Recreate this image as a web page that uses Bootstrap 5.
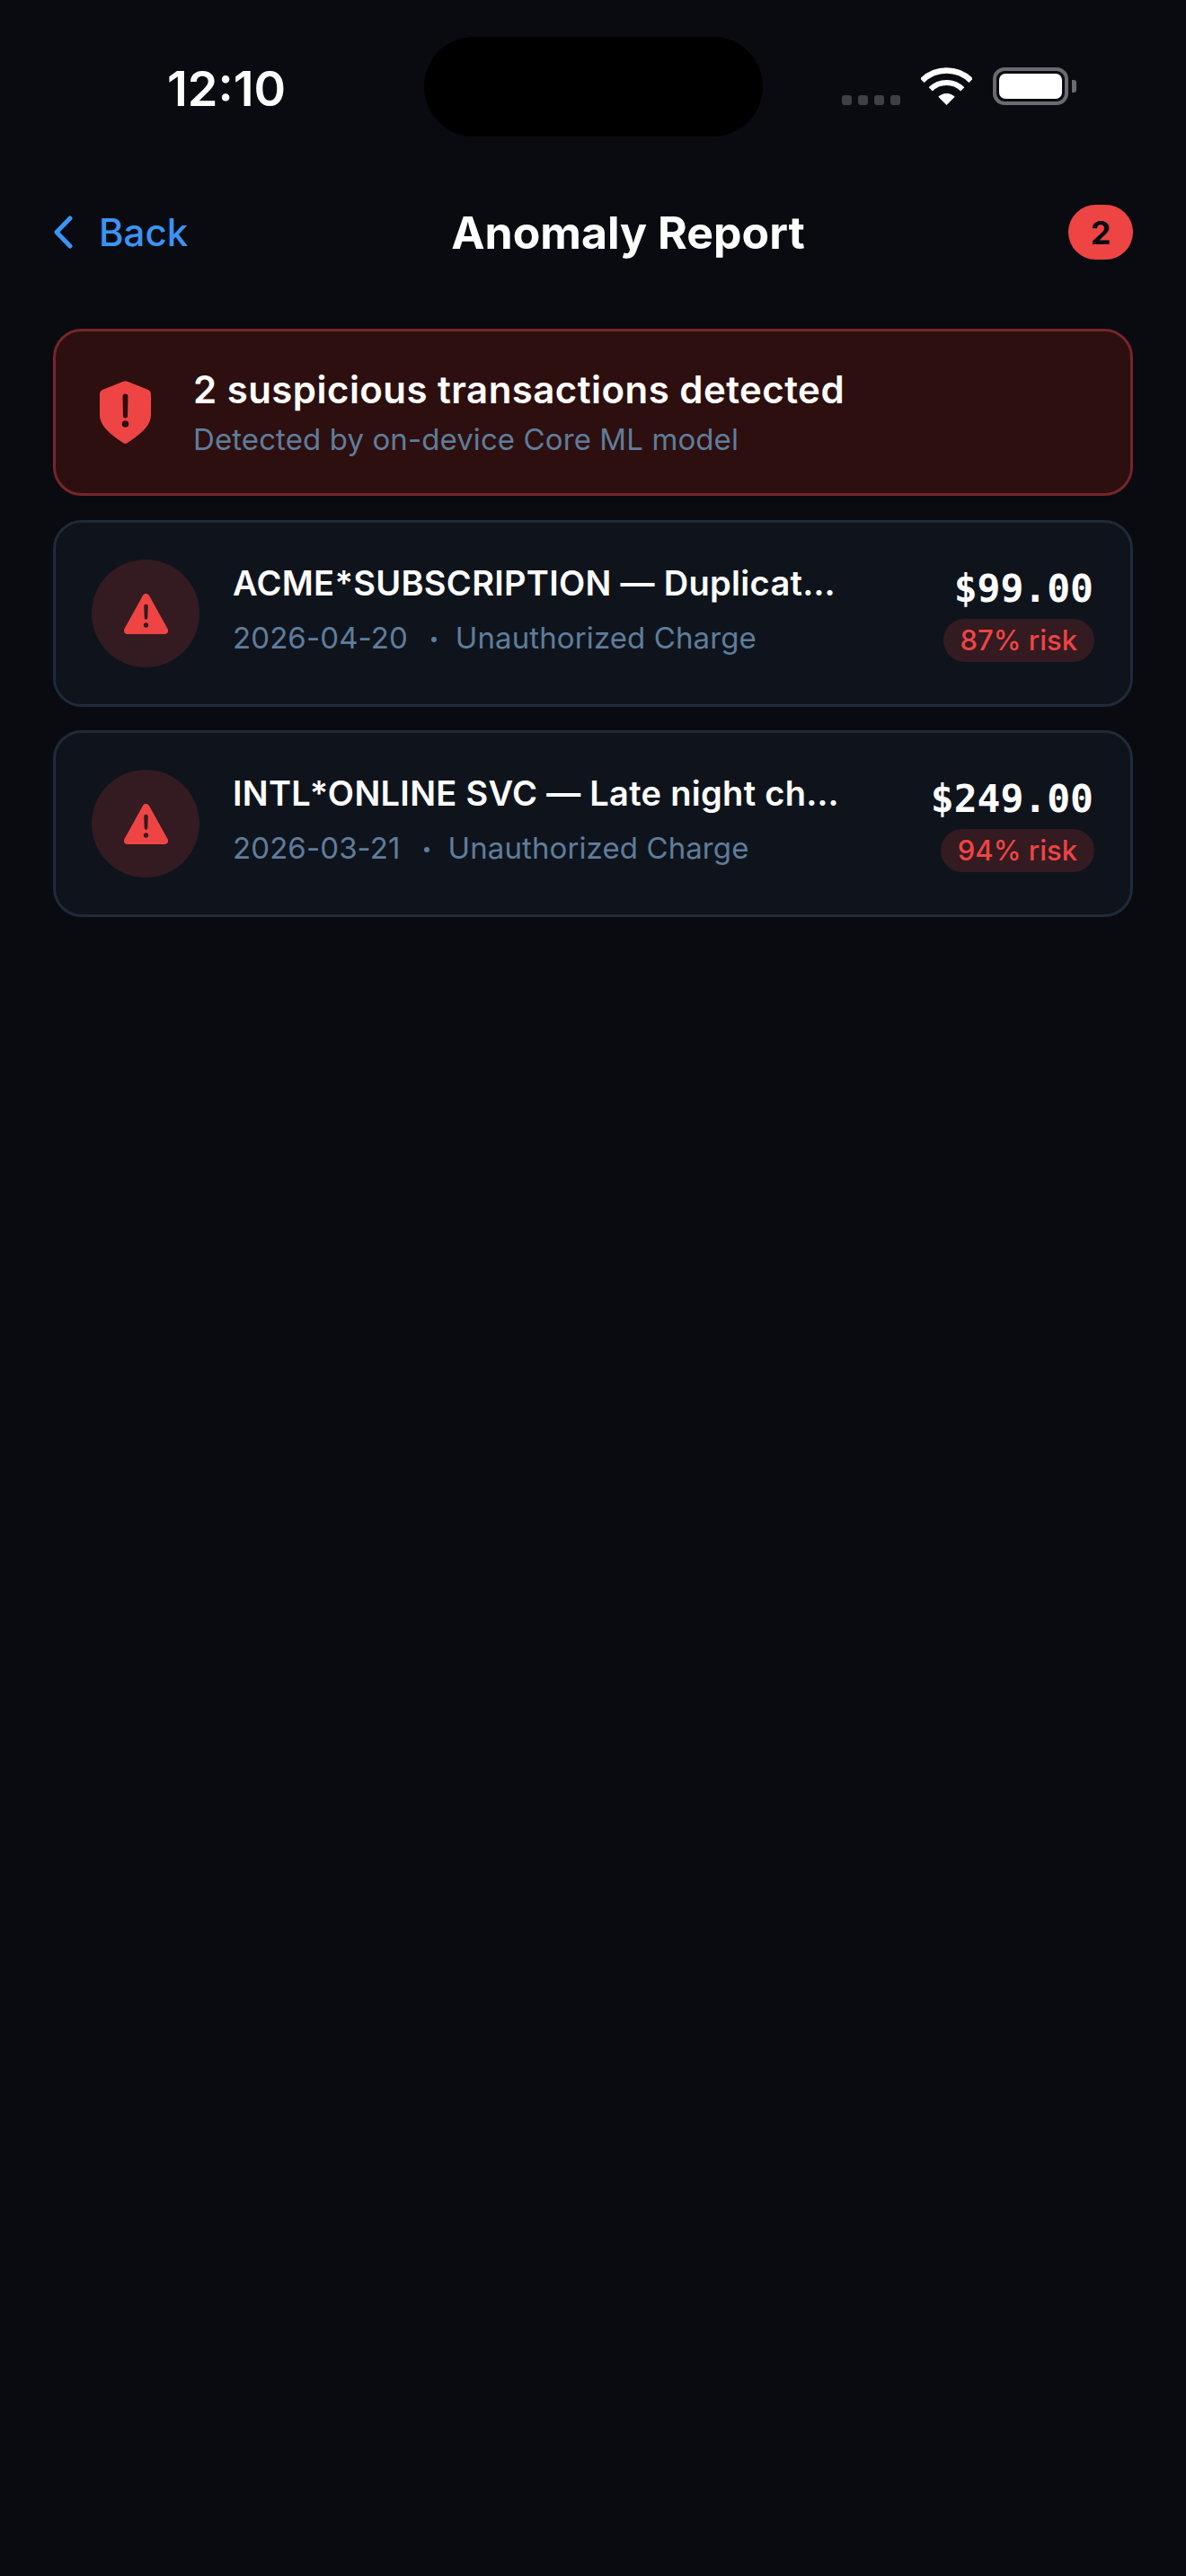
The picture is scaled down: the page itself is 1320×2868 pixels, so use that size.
<!DOCTYPE html>
<html lang="en">
<head>
  <meta charset="UTF-8">
  <meta name="viewport" content="width=device-width, initial-scale=1.0">
  <title>Anomaly Report</title>
  <link href="https://cdn.jsdelivr.net/npm/bootstrap@5.3.0/dist/css/bootstrap.min.css" rel="stylesheet">
  <style>
    body {
      background-color: #090b11;
      font-family: "Inter", "Liberation Sans", sans-serif;
      color: #fff;
    }
    .status-bar { padding-top: 41px; height: 152px; }
    .status-side { width: calc((100% - 377px) / 2); flex: none; }
    .status-time { font-size: 54px; font-weight: 600; line-height: 60px; padding: 28px 0 0 186px; }
    .island { width: 377px; height: 111px; background: #000; border-radius: 56px; }
    .status-right { padding-right: 122px; padding-top: 34px; height: 76px; gap: 23px; }
    .sig-dot { width: 11px; height: 11px; background: #3f4045; border-radius: 3px; }
    .sig-dots { gap: 7px; }
    .batt-shell { width: 84px; height: 42px; border: 4px solid #6a6b70; border-radius: 13px; padding: 3px; }
    .batt-fill { background: #fff; border-radius: 7px; height: 100%; }
    .batt-cap { width: 5px; height: 14px; background: #6a6b70; border-radius: 0 3px 3px 0; margin-left: 4px; }

    .top-nav { margin-top: 76px; padding: 0 59px; height: 61px; }
    .back-link { color: #3b94f5; font-size: 42px; font-weight: 500; gap: 29px; text-decoration: none; }
    .nav-title { font-size: 50px; font-weight: 700; line-height: 1.2; }
    .count-pill { width: 72px; height: 61px; background: #ef4444; color: #090b11; font-size: 36px; font-weight: 700; padding: 0; }

    .report-list { padding: 77px 59px 0; gap: 26px; }
    .alert-box {
      background: #2d0f0f; border: 3px solid #762629; border-radius: 32px;
      height: 186px; padding: 0 49px; gap: 47px; margin: 0 0 1px; color: #fff;
    }
    .alert-head { font-size: 42px; font-weight: 600; line-height: 50px; letter-spacing: .45px; }
    .alert-sub { font-size: 33px; color: #5f7d9c; line-height: 42px; margin-top: 9px; letter-spacing: .1px; }

    .txn-card {
      --bs-card-bg: #0f141c;
      --bs-card-border-color: #1f2a3a;
      --bs-card-border-width: 3px;
      --bs-card-border-radius: 32px;
      --bs-card-inner-border-radius: 29px;
      height: 208px;
    }
    .txn-body { padding: 0 40px; gap: 37px; height: 100%; }
    .txn-icon { width: 120px; height: 120px; background: #331b21; }
    .txn-text { padding-bottom: 11px; }
    .txn-title { font-size: 38px; font-weight: 600; line-height: 48px; color: #fff; letter-spacing: .3px; }
    .txn-meta { font-size: 33px; color: #5f7d9c; line-height: 42px; margin-top: 16px; letter-spacing: .1px; }
    .meta-dot { width: 6px; height: 6px; background: #5f7d9c; margin: 4px 21px 0 26px; }
    .txn-amount { font-family: "DejaVu Sans Mono", "Liberation Mono", monospace; font-size: 43px; font-weight: 700; line-height: 52px; margin-right: 1px; }
    .risk-pill { background: #331b21; color: #ef4444; font-size: 31px; font-weight: 500; line-height: 48px; padding: 0 19px; margin-top: 8px; }
  </style>
</head>
<body>
  <div class="status-bar d-flex align-items-start">
    <div class="status-side">
      <div class="status-time">12:10</div>
    </div>
    <div class="island flex-shrink-0"></div>
    <div class="status-side status-right d-flex justify-content-end align-items-end">
      <div class="sig-dots d-flex">
        <span class="sig-dot"></span><span class="sig-dot"></span><span class="sig-dot"></span><span class="sig-dot"></span>
      </div>
      <svg width="57" height="42" viewBox="0 0 57 42" fill="none" stroke="#fff">
        <path d="M1.3 14.8A38.5 38.5 0 0 1 55.7 14.8" stroke-width="6.5"/>
        <path d="M10.8 24.3A25 25 0 0 1 46.2 24.3" stroke-width="6"/>
        <path d="M28.5 42L19.3 32.8A13 13 0 0 1 37.7 32.8Z" fill="#fff" stroke="none"/>
      </svg>
      <div class="d-flex align-items-center">
        <div class="batt-shell"><div class="batt-fill"></div></div>
        <div class="batt-cap"></div>
      </div>
    </div>
  </div>

  <div class="top-nav d-flex justify-content-between align-items-center">
    <a class="back-link d-flex align-items-center" href="#">
      <svg width="22" height="37" viewBox="0 0 22 37" fill="none" stroke="#3b94f5" stroke-width="5" stroke-linecap="round" stroke-linejoin="round"><polyline points="19,3 4,18.5 19,34"/></svg>
      <span>Back</span>
    </a>
    <div class="nav-title">Anomaly Report</div>
    <span class="count-pill badge rounded-pill d-flex align-items-center justify-content-center">2</span>
  </div>

  <div class="report-list d-flex flex-column">
    <div class="alert alert-box d-flex align-items-center" role="alert">
      <svg class="flex-shrink-0" width="57" height="70" viewBox="0 0 57 70">
        <path fill="#ef4444" d="M26 .8Q28.500-.2 31 .8L54 10Q57 11.500 57 15V38C57 52 40 63 30.500 69.300Q28.500 70.500 26.500 69.300C17 63 0 52 0 38V15Q0 11.500 3 10Z"/>
        <path fill="#2d0f0f" d="M25.500 17.500a3 3 0 0 1 6 0L31 39a2.500 2.500 0 0 1-5 0Z"/>
        <circle cx="28.500" cy="48" r="3.800" fill="#2d0f0f"/>
      </svg>
      <div>
        <div class="alert-head">2 suspicious transactions detected</div>
        <div class="alert-sub">Detected by on-device Core ML model</div>
      </div>
    </div>

    <div class="card txn-card">
      <div class="txn-body d-flex align-items-center">
        <div class="txn-icon rounded-circle flex-shrink-0 d-flex align-items-center justify-content-center">
          <svg width="49" height="45" viewBox="0 0 49 45">
            <path fill="#ef4444" stroke="#ef4444" stroke-width="8" stroke-linejoin="round" d="M24.500 4L45 41H4Z"/>
            <path fill="#331b21" d="M22.200 14a2.300 2.300 0 0 1 4.600 0L26.300 27a1.800 1.800 0 0 1-3.600 0Z"/>
            <circle cx="24.500" cy="35" r="2.700" fill="#331b21"/>
          </svg>
        </div>
        <div class="txn-text flex-grow-1">
          <div class="txn-title">ACME*SUBSCRIPTION — Duplicat…</div>
          <div class="txn-meta d-flex align-items-center"><span>2026-04-20</span><span class="meta-dot rounded-circle"></span><span>Unauthorized Charge</span></div>
        </div>
        <div class="d-flex flex-column align-items-end flex-shrink-0">
          <div class="txn-amount">$99.00</div>
          <span class="risk-pill rounded-pill">87% risk</span>
        </div>
      </div>
    </div>

    <div class="card txn-card">
      <div class="txn-body d-flex align-items-center">
        <div class="txn-icon rounded-circle flex-shrink-0 d-flex align-items-center justify-content-center">
          <svg width="49" height="45" viewBox="0 0 49 45">
            <path fill="#ef4444" stroke="#ef4444" stroke-width="8" stroke-linejoin="round" d="M24.500 4L45 41H4Z"/>
            <path fill="#331b21" d="M22.200 14a2.300 2.300 0 0 1 4.600 0L26.300 27a1.800 1.800 0 0 1-3.600 0Z"/>
            <circle cx="24.500" cy="35" r="2.700" fill="#331b21"/>
          </svg>
        </div>
        <div class="txn-text flex-grow-1">
          <div class="txn-title">INTL*ONLINE SVC — Late night ch…</div>
          <div class="txn-meta d-flex align-items-center"><span>2026-03-21</span><span class="meta-dot rounded-circle"></span><span>Unauthorized Charge</span></div>
        </div>
        <div class="d-flex flex-column align-items-end flex-shrink-0">
          <div class="txn-amount">$249.00</div>
          <span class="risk-pill rounded-pill">94% risk</span>
        </div>
      </div>
    </div>
  </div>

  <script src="https://cdn.jsdelivr.net/npm/bootstrap@5.3.0/dist/js/bootstrap.bundle.min.js"></script>
</body>
</html>
